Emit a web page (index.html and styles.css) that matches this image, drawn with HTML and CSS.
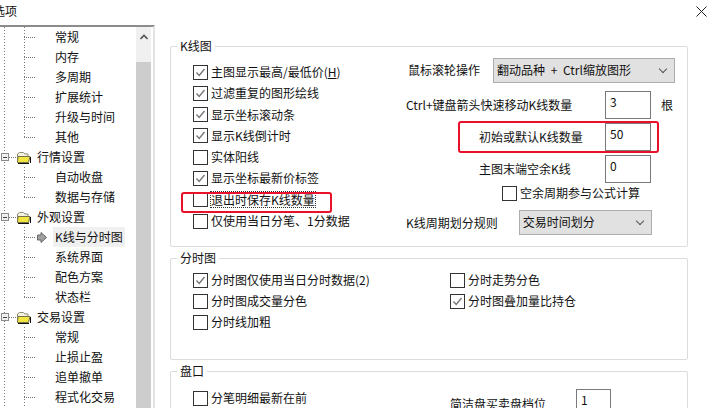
FILE: index.html
```html
<!DOCTYPE html>
<html lang="zh-CN">
<head>
  <meta charset="UTF-8">
  <title>选项</title>
  <link rel="stylesheet" href="styles.css">
</head>
<body>
  <div class="titlebar">
    <span class="title">选项</span>
    <svg class="close" width="11" height="11" viewBox="0 0 11 11"><path d="M0.5 0.5L10.5 10.5M10.5 0.5L0.5 10.5" stroke="#222" fill="none"/></svg>
  </div>

  <div class="main">
    <div class="side">
      <div class="tree">
        <div class="branch">
          <div class="node">常规</div>
          <div class="node">内存</div>
          <div class="node">多周期</div>
          <div class="node">扩展统计</div>
          <div class="node">升级与时间</div>
          <div class="node">其他</div>
        </div>
        <div class="group">
          <span class="minus"></span>
          <svg class="folder" width="15" height="13" viewBox="0 0 15 13"><path d="M1.500 11V3L3.500 1.500H7.500L9 3H12V5" fill="#f6f2e0" stroke="#8a8a7a"/><path d="M2 5.500H14L12.500 11.500H1.500Z" fill="#f2e640" stroke="#77704a"/><path d="M13 12.500H2M14.500 6V12" stroke="#111" fill="none"/></svg>
          <span>行情设置</span>
        </div>
        <div class="branch">
          <div class="node">自动收盘</div>
          <div class="node">数据与存储</div>
        </div>
        <div class="group">
          <span class="minus"></span>
          <svg class="folder" width="15" height="13" viewBox="0 0 15 13"><path d="M1.500 11V3L3.500 1.500H7.500L9 3H12V5" fill="#f6f2e0" stroke="#8a8a7a"/><path d="M2 5.500H14L12.500 11.500H1.500Z" fill="#f2e640" stroke="#77704a"/><path d="M13 12.500H2M14.500 6V12" stroke="#111" fill="none"/></svg>
          <span>外观设置</span>
        </div>
        <div class="branch">
          <div class="node current">
            <svg class="arrow" width="10" height="11" viewBox="0 0 10 11"><path d="M4 0.500L9.500 5.500L4 10.500V8H0.500V3H4Z" fill="#a0a0a0" stroke="#666"/></svg>
            <span class="selected">K线与分时图</span>
          </div>
          <div class="node">系统界面</div>
          <div class="node">配色方案</div>
          <div class="node">状态栏</div>
        </div>
        <div class="group">
          <span class="minus"></span>
          <svg class="folder" width="15" height="13" viewBox="0 0 15 13"><path d="M1.500 11V3L3.500 1.500H7.500L9 3H12V5" fill="#f6f2e0" stroke="#8a8a7a"/><path d="M2 5.500H14L12.500 11.500H1.500Z" fill="#f2e640" stroke="#77704a"/><path d="M13 12.500H2M14.500 6V12" stroke="#111" fill="none"/></svg>
          <span>交易设置</span>
        </div>
        <div class="branch branch-open">
          <div class="node">常规</div>
          <div class="node">止损止盈</div>
          <div class="node">追单撤单</div>
          <div class="node">程式化交易</div>
        </div>
      </div>
      <div class="scrollbar">
        <div class="scroll-up">
          <svg width="8" height="6" viewBox="0 0 8 6"><path d="M0.500 5L4 1.500L7.500 5" stroke="#555" stroke-width="1.600" fill="none"/></svg>
        </div>
        <div class="scroll-thumb"></div>
      </div>
    </div>

    <div class="content">
      <fieldset class="box box-kline">
        <legend>K线图</legend>
        <div class="kline-cols">
          <div class="checks">
            <label class="check on">主图显示最高/最低价(<u>H</u>)</label>
            <label class="check on">过滤重复的图形绘线</label>
            <label class="check on">显示坐标滚动条</label>
            <label class="check on">显示K线倒计时</label>
            <label class="check">实体阳线</label>
            <label class="check on">显示坐标最新价标签</label>
            <label class="check"><span class="focus">退出时保存K线数量</span></label>
            <label class="check">仅使用当日分笔、1分数据</label>
          </div>
          <div class="settings">
            <div class="row row-wheel">
              <span class="row-label">鼠标滚轮操作</span>
              <div class="select select-wheel"><span>翻动品种 + Ctrl缩放图形</span><i class="chev"></i></div>
            </div>
            <div class="row row-num">
              <span class="row-label">Ctrl+键盘箭头快速移动K线数量</span>
              <div class="num">3</div>
              <span class="unit">根</span>
            </div>
            <div class="row row-num">
              <span class="row-label indent">初始或默认K线数量</span>
              <div class="num">50</div>
            </div>
            <div class="row row-num">
              <span class="row-label indent">主图末端空余K线</span>
              <div class="num">0</div>
            </div>
            <label class="check check-spare">空余周期参与公式计算</label>
            <div class="row row-rule">
              <span class="row-label">K线周期划分规则</span>
              <div class="select select-rule"><span>交易时间划分</span><i class="chev"></i></div>
            </div>
          </div>
        </div>
      </fieldset>

      <fieldset class="box box-time">
        <legend>分时图</legend>
        <div class="time-cols">
          <div class="checks-tight">
            <label class="check on">分时图仅使用当日分时数据(2)</label>
            <label class="check">分时图成交量分色</label>
            <label class="check">分时线加粗</label>
          </div>
          <div class="checks-tight">
            <label class="check">分时走势分色</label>
            <label class="check on">分时图叠加量比持仓</label>
          </div>
        </div>
      </fieldset>

      <fieldset class="box box-pan">
        <legend>盘口</legend>
        <div class="pan-cols">
          <label class="check">分笔明细最新在前</label>
          <div class="pan-level">
            <span>简洁盘买卖盘档位</span>
            <div class="num num-pan">1</div>
          </div>
        </div>
      </fieldset>

      <div class="mark mark-default"></div>
      <div class="mark mark-exit"></div>
    </div>
  </div>
</body>
</html>
```

FILE: styles.css
```css
* {
  box-sizing: border-box;
}

html, body {
  height: 408px;
  overflow: hidden;
}

body {
  margin: 0;
  background: #fff;
  color: #111;
  font-family: "Noto Sans CJK SC", "Liberation Sans", sans-serif;
  font-size: 12px;
  line-height: 16px;
}

.titlebar {
  height: 25px;
  display: flex;
  justify-content: space-between;
  align-items: flex-start;
  padding: 3px 10px 0 0;
}

.title {
  margin-left: -7px;
}

.close {
  margin-top: 3px;
}

.main {
  display: flex;
  height: 383px;
  overflow: hidden;
}

/* left tree */
.side {
  width: 155px;
  flex: none;
  display: flex;
  border-top: 2px solid #8c8c8c;
  border-right: 2px solid #e3e3e3;
  margin-right: 15px;
}

.tree {
  width: 136px;
  flex: none;
  overflow: hidden;
  background: repeating-linear-gradient(#777 0 1px, transparent 1px 3px) 4px 0 / 1px 100% no-repeat;
}

.group,
.node {
  height: 20px;
  display: flex;
  align-items: center;
  white-space: nowrap;
}

.group {
  background: repeating-linear-gradient(90deg, #777 0 1px, transparent 1px 2px) 9px 10px / 7px 1px no-repeat;
}

.group > span:last-child {
  margin-left: 6px;
}

.minus {
  width: 8px;
  height: 8px;
  margin-left: 1px;
  flex: none;
  border: 1px solid #8a8a8a;
  background: linear-gradient(#444, #444) center / 4px 1px no-repeat, #f0f0f0;
}

.folder {
  margin-left: 7px;
  flex: none;
}

.branch {
  margin-left: 24px;
}

.node {
  position: relative;
  padding-left: 31px;
}

/* dotted joints of the tree */
.node::before {
  content: "";
  position: absolute;
  left: 0;
  top: 10px;
  width: 11px;
  height: 1px;
  background: repeating-linear-gradient(90deg, #777 0 1px, transparent 1px 2px);
}

.node::after {
  content: "";
  position: absolute;
  left: 0;
  top: 0;
  width: 1px;
  height: 100%;
  background: repeating-linear-gradient(#777 0 1px, transparent 1px 3px);
}

.node:last-child::after {
  height: 11px;
}

.branch-open .node:last-child::after {
  height: 100%;
}

.node.current {
  padding-left: 13px;
}

.arrow {
  flex: none;
}

.selected {
  background: #f0f0f0;
  margin-left: 6px;
  padding: 2px;
}

.scrollbar {
  width: 15px;
  flex: none;
  background: #f0f0f0;
}

.scroll-up {
  height: 35px;
  padding-top: 7px;
}

.scroll-up svg {
  display: block;
  margin: 0 auto;
}

.scroll-thumb {
  height: 346px;
  background: #cdcdcd;
}

/* right side */
.content {
  position: relative;
  width: 518px;
  flex: none;
  padding-top: 14px;
}

.box {
  margin: 0 0 4px;
  padding: 0;
  border: 1px solid #dcdcdc;
  border-radius: 2px;
}

.box legend {
  margin-left: 6px;
  padding: 0 3px;
  line-height: 14px;
}

.box-kline {
  height: 208px;
}

.box-time {
  height: 109px;
}

.box-pan {
  height: 80px;
}

.kline-cols {
  display: flex;
  padding: 11px 0 0 22px;
}

.checks {
  width: 213px;
  flex: none;
  display: flex;
  flex-direction: column;
  gap: 5.3px;
}

.check {
  height: 16px;
  display: flex;
  align-items: center;
  white-space: nowrap;
}

.check::before {
  content: "";
  width: 13px;
  height: 13px;
  margin-right: 3px;
  flex: none;
  border: 1px solid #333;
  background: #fff;
}

.check.on::before {
  background: #fff url("data:image/svg+xml,%3Csvg xmlns='http://www.w3.org/2000/svg' width='11' height='11'%3E%3Cpath d='M1.500 5.500L4.200 8.500L9.500 2' stroke='%23777' stroke-width='1.400' fill='none'/%3E%3C/svg%3E") center no-repeat;
}

.focus {
  outline: 1px dotted #333;
  line-height: 15px;
}

.settings {
  flex: 1;
  margin-top: -7px;
}

.row {
  display: flex;
  align-items: center;
}

.row-label {
  white-space: nowrap;
}

.row-wheel {
  height: 26px;
  padding-left: 2px;
  gap: 13px;
}

.select {
  height: 25px;
  display: flex;
  align-items: center;
  justify-content: space-between;
  padding: 0 8px 0 3px;
  background: #e1e1e1;
  border: 1px solid #adadad;
  white-space: nowrap;
}

.select span {
  margin-top: -1px;
}

.select-wheel {
  width: 182px;
  word-spacing: 3px;
}

.select-rule {
  width: 133px;
}

.chev {
  width: 6px;
  height: 6px;
  margin-bottom: 3px;
  border-right: 1px solid #555;
  border-bottom: 1px solid #555;
  transform: rotate(45deg);
}

.row-num {
  height: 32px;
}

.row-wheel + .row-num {
  margin-top: 6px;
}

.row-num .row-label {
  width: 199px;
}

.row-num .indent {
  padding-left: 73px;
}

.num {
  width: 46px;
  height: 28px;
  padding: 2px 4px;
  border: 1px solid #7a7a7a;
}

.unit {
  margin-left: 10px;
}

.check-spare {
  margin-left: 96px;
}

.row-rule {
  height: 25px;
  margin-top: 9px;
  gap: 21px;
}

.time-cols {
  display: flex;
  padding: 7px 0 0 22px;
}

.time-cols .checks-tight:first-child {
  width: 257px;
}

.checks-tight {
  display: flex;
  flex-direction: column;
  gap: 5px;
}

.pan-cols {
  display: flex;
  padding: 12px 0 0 22px;
}

.pan-cols .check {
  width: 257px;
}

.pan-level {
  display: flex;
  align-items: flex-start;
  gap: 30px;
}

.pan-level span {
  margin-top: 6px;
}

.num-pan {
  width: 35px;
  margin-top: -1px;
}

/* red annotations */
.mark {
  position: absolute;
  border: 2px solid #e8102a;
  border-radius: 3px;
}

.mark-default {
  left: 288px;
  top: 96px;
  width: 201px;
  height: 32px;
}

.mark-exit {
  left: 11px;
  top: 167px;
  width: 151px;
  height: 21px;
}
```
